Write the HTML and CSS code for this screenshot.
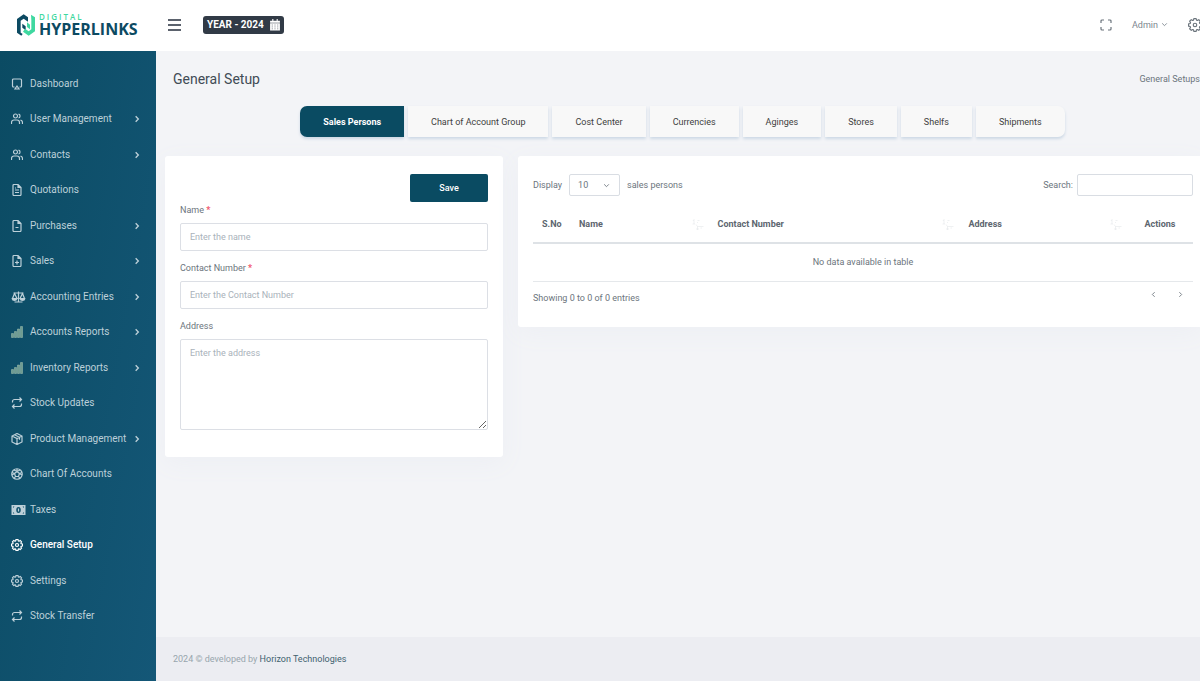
FILE: index.html
```html
<!DOCTYPE html>
<html lang="en">
<head>
<meta charset="utf-8">
<title>General Setup</title>
<link rel="stylesheet" href="styles.css">
</head>
<body>
<svg class="defs" aria-hidden="true">
  <symbol id="monitor" viewBox="0 0 24 24"><path d="M7 18H5a2 2 0 0 1-2-2V4a2 2 0 0 1 2-2h14a2 2 0 0 1 2 2v12a2 2 0 0 1-2 2h-2M12 16l4 6H8z"/></symbol>
  <symbol id="users" viewBox="0 0 24 24"><path d="M1 22v-3a5 5 0 0 1 5-5h6a5 5 0 0 1 5 5v3M23 22v-3a5 5 0 0 0-4-4.800M15 2.200a4 4 0 0 1 0 7.800"/><circle cx="9" cy="6" r="4"/></symbol>
  <symbol id="file-text" viewBox="0 0 24 24"><path d="M14 1H6a2 2 0 0 0-2 2v18a2 2 0 0 0 2 2h12a2 2 0 0 0 2-2V7zM14 1v6h6M8 12h8M8 17h8M8 8h2"/></symbol>
  <symbol id="file-minus" viewBox="0 0 24 24"><path d="M14 1H6a2 2 0 0 0-2 2v18a2 2 0 0 0 2 2h12a2 2 0 0 0 2-2V7zM14 1v6h6M9 15h6"/></symbol>
  <symbol id="file-plus" viewBox="0 0 24 24"><path d="M14 1H6a2 2 0 0 0-2 2v18a2 2 0 0 0 2 2h12a2 2 0 0 0 2-2V7zM14 1v6h6M8 15h8M12 11v8"/></symbol>
  <symbol id="scale" viewBox="0 0 28 24"><path d="M4 4h20M14 1v20M6 22h16M6 5L2 15h9zM22 5l-5 10h9z"/><path class="solid" d="M0 15h12q-1 5-6 5t-6-5zM16 15h12q-1 5-6 5t-6-5z"/></symbol>
  <symbol id="bars" viewBox="0 0 24 24"><path class="bar" d="M1 15h4v8H1zM7 11h4v12H7zM13 6h4v17h-4zM19 1h4v22h-4z"/></symbol>
  <symbol id="repeat" viewBox="0 0 24 24"><path d="M17 1l4 4-4 4M3 11V9a4 4 0 0 1 4-4h14M7 23l-4-4 4-4M21 13v2a4 4 0 0 1-4 4H3"/></symbol>
  <symbol id="box" viewBox="0 0 24 24"><path d="M12 1l10 5v12l-10 5-10-5V6zM2 6l10 5 10-5M12 11v12M7 3.500l10 5v5"/></symbol>
  <symbol id="ball" viewBox="0 0 24 24"><circle cx="12" cy="12" r="10.500"/><path d="M12 7l5 4-2 6H9l-2-6zM12 7V2M17 11l5-2M15 17l3 4M9 17l-3 4M7 11L2 9M6 4l6 3 6-3M2 14l5-3M22 14l-5-3"/></symbol>
  <symbol id="cash" viewBox="0 0 30 22"><path class="solid" fill-rule="evenodd" d="M1 1h28v20H1zM15 5a4.500 6 0 1 0 0 12a4.500 6 0 1 0 0-12zM4 4v3l3-3zM26 4v3l-3-3zM4 18v-3l3 3zM26 18v-3l-3 3z"/><path d="M15 8v6"/></symbol>
  <symbol id="gear" viewBox="0 0 24 24"><circle cx="12" cy="12" r="3"/><path stroke-linejoin="round" d="M9.400 3.700L10 1h4l.6 2.700L16 4.300l2.400-1.500 2.800 2.800L19.700 8l.6 1.400L23 10v4l-2.700.6-.6 1.400 1.500 2.400-2.800 2.800-2.400-1.500-1.400.6L14 23h-4l-.6-2.700L8 19.700l-2.400 1.500-2.800-2.800L4.300 16l-.6-1.400L1 14v-4l2.700-.6L4.300 8 2.800 5.600l2.800-2.800L8 4.300z"/></symbol>
  <symbol id="right" viewBox="0 0 24 24"><path d="M8 4l8 8-8 8"/></symbol>
  <symbol id="left" viewBox="0 0 24 24"><path d="M16 4l-8 8 8 8"/></symbol>
  <symbol id="down" viewBox="0 0 24 24"><path d="M4 8l8 8 8-8"/></symbol>
  <symbol id="expand" viewBox="0 0 24 24"><path d="M8 2H4a2 2 0 0 0-2 2v4M22 8V4a2 2 0 0 0-2-2h-4M16 22h4a2 2 0 0 0 2-2v-4M2 16v4a2 2 0 0 0 2 2h4"/></symbol>
  <symbol id="sort" viewBox="0 0 24 24"><path d="M1 11h5M4 11V2l-2 3M11 4h4M10 8h2M8 12l3 4h12M11 16v7M8 21h6M17 19h3"/></symbol>
</svg>

<header class="topbar">
  <a class="brand" href="#" aria-label="Digital Hyperlinks">
    <svg class="brand-mark" viewBox="0 0 54 66" aria-hidden="true">
      <path class="mark-dark" d="M0 15L20 1l13 9v13l-13-9-9 6v36l6 4-4 5L0 56z"/>
      <path class="mark-dark" d="M16 29l10 8v12l-10-8z"/>
      <path class="mark-light" d="M42 2l12 8v42L35 65 18 53l6-9 11 8 8-6V19z"/>
      <path class="mark-light" d="M30 25l9 7v14l-9-7z"/>
    </svg>
    <span class="brand-text"><span class="brand-top">DIGITAL</span><span class="brand-name">HYPERLINKS</span></span>
  </a>
  <button class="menu-button" type="button" aria-label="Toggle menu"><span></span><span></span><span></span></button>
  <button class="year" type="button">YEAR - 2024
    <svg viewBox="0 0 18 22" aria-hidden="true"><path d="M4 0h2v3h6V0h2v3h4v4H0V3h4zM0 8h18v13H0z"/><path class="cells" d="M3 11h2M8 11h2M13 11h2M3 14.500h2M8 14.500h2M13 14.500h2M3 18h2M8 18h2M13 18h2"/></svg>
  </button>
  <div class="top-actions">
    <button class="plain" type="button" aria-label="Fullscreen"><svg class="icon"><use href="#expand"/></svg></button>
    <button class="plain admin" type="button">Admin <svg class="chevron"><use href="#down"/></svg></button>
    <button class="plain" type="button" aria-label="Settings"><svg class="icon gear"><use href="#gear"/></svg></button>
  </div>
</header>

<div class="shell">
  <nav class="sidebar" aria-label="Main">
    <a href="#"><svg class="icon"><use href="#monitor"/></svg>Dashboard</a>
    <a href="#"><svg class="icon"><use href="#users"/></svg>User Management<svg class="chevron"><use href="#right"/></svg></a>
    <a href="#"><svg class="icon"><use href="#users"/></svg>Contacts<svg class="chevron"><use href="#right"/></svg></a>
    <a href="#"><svg class="icon"><use href="#file-text"/></svg>Quotations</a>
    <a href="#"><svg class="icon"><use href="#file-minus"/></svg>Purchases<svg class="chevron"><use href="#right"/></svg></a>
    <a href="#"><svg class="icon"><use href="#file-plus"/></svg>Sales<svg class="chevron"><use href="#right"/></svg></a>
    <a href="#"><svg class="icon wide"><use href="#scale"/></svg>Accounting Entries<svg class="chevron"><use href="#right"/></svg></a>
    <a href="#"><svg class="icon"><use href="#bars"/></svg>Accounts Reports<svg class="chevron"><use href="#right"/></svg></a>
    <a href="#"><svg class="icon"><use href="#bars"/></svg>Inventory Reports<svg class="chevron"><use href="#right"/></svg></a>
    <a href="#"><svg class="icon"><use href="#repeat"/></svg>Stock Updates</a>
    <a href="#"><svg class="icon"><use href="#box"/></svg>Product Management<svg class="chevron"><use href="#right"/></svg></a>
    <a href="#"><svg class="icon"><use href="#ball"/></svg>Chart Of Accounts</a>
    <a href="#"><svg class="icon wide"><use href="#cash"/></svg>Taxes</a>
    <a class="current" href="#" aria-current="page"><svg class="icon"><use href="#gear"/></svg>General Setup</a>
    <a href="#"><svg class="icon"><use href="#gear"/></svg>Settings</a>
    <a href="#"><svg class="icon"><use href="#repeat"/></svg>Stock Transfer</a>
  </nav>

  <div class="page">
    <main>
      <div class="page-head"><h1>General Setup</h1><span>General Setups</span></div>
      <div class="tabs" role="tablist">
        <button type="button" role="tab" aria-selected="true">Sales Persons</button>
        <button type="button" role="tab" aria-selected="false">Chart of Account Group</button>
        <button type="button" role="tab" aria-selected="false">Cost Center</button>
        <button type="button" role="tab" aria-selected="false">Currencies</button>
        <button type="button" role="tab" aria-selected="false">Aginges</button>
        <button type="button" role="tab" aria-selected="false">Stores</button>
        <button type="button" role="tab" aria-selected="false">Shelfs</button>
        <button type="button" role="tab" aria-selected="false">Shipments</button>
      </div>
      <div class="columns">
        <form class="card form-card">
          <button class="save" type="button">Save</button>
          <label for="name">Name <b>*</b></label>
          <input id="name" type="text" placeholder="Enter the name">
          <label for="contact">Contact Number <b>*</b></label>
          <input id="contact" type="text" placeholder="Enter the Contact Number">
          <label for="address">Address</label>
          <textarea id="address" placeholder="Enter the address"></textarea>
        </form>
        <section class="card table-card">
          <div class="table-tools">
            <label>Display
              <span class="select-wrap"><select><option>10</option></select><svg class="chevron"><use href="#down"/></svg></span>
              sales persons</label>
            <label>Search: <input type="search"></label>
          </div>
          <table>
            <colgroup><col class="c-no"><col class="c-name"><col class="c-contact"><col class="c-address"><col class="c-actions"></colgroup>
            <thead><tr>
              <th>S.No</th>
              <th><span class="sortable">Name<svg><use href="#sort"/></svg></span></th>
              <th><span class="sortable">Contact Number<svg><use href="#sort"/></svg></span></th>
              <th><span class="sortable">Address<svg><use href="#sort"/></svg></span></th>
              <th class="center">Actions</th>
            </tr></thead>
            <tbody><tr><td colspan="5">No data available in table</td></tr></tbody>
          </table>
          <div class="table-foot">
            <span>Showing 0 to 0 of 0 entries</span>
            <span class="pager">
              <button class="plain" type="button" aria-label="Previous"><svg class="chevron"><use href="#left"/></svg></button>
              <button class="plain" type="button" aria-label="Next"><svg class="chevron"><use href="#right"/></svg></button>
            </span>
          </div>
        </section>
      </div>
    </main>
    <footer>2024 © developed by <a href="#">Horizon Technologies</a></footer>
  </div>
</div>
</body>
</html>
```
FILE: styles.css
```css
* { box-sizing: border-box; }
body {
  margin: 0;
  min-height: 100vh;
  display: flex;
  flex-direction: column;
  background: #f3f4f7;
  color: #6c757d;
  font: 9px/16px Roboto, sans-serif;
  overflow-x: hidden;
}
button, input, select, textarea { font: inherit; color: inherit; }
button { cursor: pointer; }
a { color: inherit; text-decoration: none; }
svg { fill: none; stroke: currentColor; stroke-width: 2.4; flex: none; }
.defs { position: absolute; width: 0; height: 0; }
.icon { width: 12px; height: 12px; }
.chevron { width: 7px; height: 7px; stroke-width: 3; }
.plain { display: flex; align-items: center; padding: 0; border: 0; background: none; }
.solid { fill: currentColor; stroke: none; }

.topbar { display: flex; align-items: center; height: 51px; background: #fff; padding: 0 0 2px 17px; }
.brand { display: flex; align-items: center; width: 151px; gap: 4px; }
.brand-mark { width: 18px; height: 22px; stroke: none; }
.mark-dark { fill: #0c4a62; }
.mark-light { fill: #3fd8a0; }
.brand-text { display: flex; flex-direction: column; font-family: "Open Sans", sans-serif; }
.brand-top { color: #3fd8a0; font-size: 8px; line-height: 9px; font-weight: 600; letter-spacing: 2px; }
.brand-name { color: #0c4a62; font-size: 16px; line-height: 16px; font-weight: 700; }
.menu-button { display: flex; flex-direction: column; gap: 3px; width: 13px; padding: 0; border: 0; background: none; }
.menu-button span { height: 2px; background: #5b626d; }
.year {
  display: flex; align-items: center; gap: 6px; height: 18px; margin-left: 22px; padding: 0 4px;
  border: 0; border-radius: 3px; background: #313a46; color: #fff;
  font: bold 10px/18px Roboto, sans-serif;
}
.year svg { width: 10px; height: 12px; fill: #fff; stroke: none; }
.year .cells { stroke: #313a46; stroke-width: 1; }
.top-actions { display: flex; align-items: center; gap: 20px; margin-left: auto; margin-right: -2px; }
.admin { gap: 3px; color: #7b858e; }
.gear { width: 14px; height: 14px; stroke-width: 2; }

.shell { display: flex; flex: 1; }
.sidebar {
  position: relative; z-index: 1;
  display: flex; flex-direction: column; flex: none; width: 156px; padding: 15px 15px 47px 11px;
  background: linear-gradient(100deg, #0b4b63, #145777);
  color: #bdd0d9; font: 10px/16px Roboto, sans-serif;
}
.sidebar a { display: flex; flex: 1; align-items: center; gap: 7px; white-space: nowrap; }
.sidebar .current { color: #fff; font-weight: 500; }
.sidebar .wide { width: 15px; margin-right: -3px; }
.sidebar .chevron { width: 8px; height: 8px; margin-left: auto; stroke-width: 4; }
.bar { fill: #6f9d90; stroke: #a5c3b2; stroke-width: 1; }

.page { display: flex; flex: 1; flex-direction: column; min-width: 0; }
main { flex: 1; padding: 0 0 24px 9px; }
.page-head { display: flex; align-items: center; justify-content: space-between; height: 55px; padding-left: 8px; }
h1 { margin: 0; color: #414b55; font: 400 14px/20px Roboto, sans-serif; }
.tabs { display: flex; justify-content: center; gap: 4px; margin-bottom: 19px; }
.tabs button {
  height: 31px; padding: 0 23px; border: 0; background: #f8f8f8; color: #404040;
  box-shadow: 0 2px 3px #ccd8e5; white-space: nowrap;
}
.tabs button:first-child { border-radius: 7px 0 0 7px; }
.tabs button:last-child { border-radius: 0 7px 7px 0; }
.tabs [aria-selected="true"] { background: #0a4b62; color: #fff; font-weight: bold; }

.columns { display: grid; grid-template-columns: minmax(0, 338fr) minmax(0, 682fr); align-items: start; gap: 15px; }
.card { background: #fff; border-radius: 3px; box-shadow: 0 6px 24px #edeff4; }
.form-card { display: flex; flex-direction: column; padding: 18px 15px 27px; }
.table-card { padding: 18px 7px 21px 15px; border-radius: 3px 0 0 3px; }
.save { align-self: flex-end; width: 78px; height: 28px; border: 0; border-radius: 2px; background: #0a4b62; color: #fff; font-weight: 500; }
.form-card label { line-height: 16px; margin-bottom: 5px; }
.form-card b { color: #f1556c; }
.form-card input, .form-card textarea { padding: 0 9px; border: 1px solid #dcdfe5; border-radius: 2px; background: #fff; }
.form-card input { height: 28px; margin-bottom: 9px; }
.form-card textarea { height: 91px; padding-top: 5px; resize: vertical; }
::placeholder { color: #a9b2ba; opacity: 1; }

.table-tools { display: flex; justify-content: space-between; height: 22px; }
.table-tools label { display: flex; align-items: center; gap: 7px; }
.table-tools label:last-child { gap: 4px; }
.select-wrap { display: flex; align-items: center; width: 51px; height: 22px; }
select { appearance: none; flex: none; width: 51px; height: 22px; padding: 0 8px; border: 1px solid #d9dde3; border-radius: 2px; background: #fff; }
.select-wrap .chevron { flex: none; margin-left: -17px; pointer-events: none; }
.table-tools input { width: 116px; height: 22px; border: 1px solid #d9dde3; border-radius: 2px; background: #fff; }
table { width: 100%; margin-top: 10px; border-collapse: collapse; table-layout: fixed; }
.c-no { width: 37px; }
.c-name { width: 21%; }
.c-contact { width: 38%; }
.c-actions { width: 10%; }
th { height: 37px; padding: 0 5px 0 9px; border-bottom: 2px solid #dee2e6; text-align: left; color: #5d666f; white-space: nowrap; }
.sortable { display: flex; align-items: center; justify-content: space-between; }
.sortable svg { width: 12px; height: 13px; color: #dfe2e5; stroke-width: 1; }
.center { text-align: center; padding: 0; }
td { height: 38px; padding: 0; border-bottom: 1px solid #e5e8eb; text-align: center; }
.table-foot { display: flex; justify-content: space-between; padding-top: 8px; }
.pager { display: flex; gap: 20px; height: 10px; margin-right: 9px; }

footer { padding: 14px 17px 14px; background: #ecedf2; color: #98a6ad; }
footer a { color: #41616f; }
```
